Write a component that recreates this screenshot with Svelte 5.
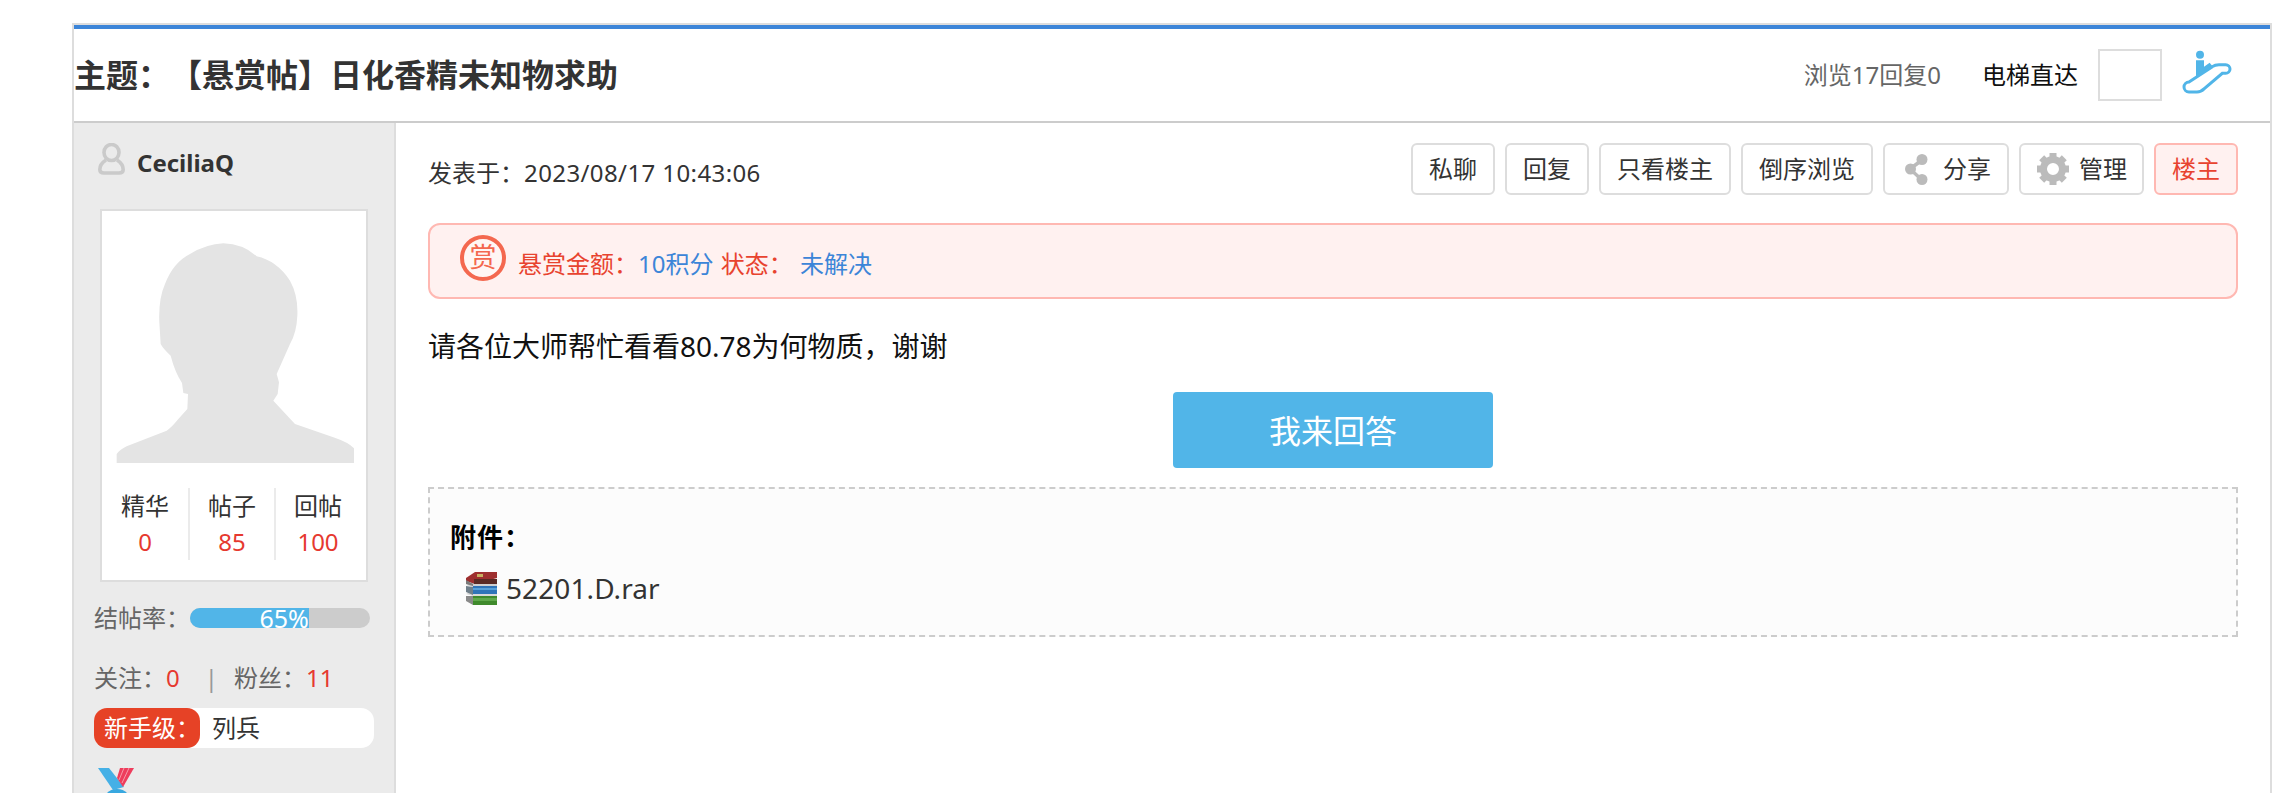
<script>
  const rate = 65;
  const stats = [
    { label: '精华', value: 0 },
    { label: '帖子', value: 85 },
    { label: '回帖', value: 100 }
  ];
  const teeth = [0, 45, 90, 135, 180, 225, 270, 315];
</script>

<div class="page">
  <div class="topic">
    <header class="head">
      <h1>主题：【悬赏帖】日化香精未知物求助</h1>
      <div class="head-right">
        <span class="views">浏览17回复0</span>
        <span class="lift">电梯直达</span>
        <input class="floor" type="text" aria-label="楼层" />
        <svg class="lift-icon" width="65" height="55" viewBox="0 0 195 165" aria-hidden="true">
          <circle cx="75" cy="26" r="12" fill="#51b5e8" />
          <path d="M63 43 H87 V62 L104 50 L112 60 L78 86 L63 96 Z" fill="#51b5e8" />
          <path d="M42 108 L112 62 Q120 56 132 56 H152 A13 13 0 0 1 152 82 H142 L88 128 Q78 138 66 138 H42 A15 15 0 0 1 42 108 Z" fill="none" stroke="#51b5e8" stroke-width="9" />
        </svg>
      </div>
    </header>

    <div class="body">
      <aside class="side">
        <div class="user">
          <svg class="user-icon" width="27" height="32" viewBox="0 0 27 32" aria-hidden="true">
            <ellipse cx="13.5" cy="9.5" rx="7.5" ry="8" fill="none" stroke="#cacaca" stroke-width="3.6" />
            <path d="M8 17 Q1.8 21 1.8 26.5 Q1.8 30 6 30 H21 Q25.2 30 25.2 26.5 Q25.2 21 19 17" fill="none" stroke="#cacaca" stroke-width="3.6" />
          </svg>
          <span class="name">CeciliaQ</span>
        </div>

        <div class="card">
          <svg class="avatar" width="264" height="252" viewBox="6 6 792 756" aria-hidden="true">
            <path fill="#e4e4e4" d="M50 762 L50 735 Q60 722 80 712 L200 665 Q215 655 235 630 L262 600 L264 555 L250 552 L246 522 Q225 490 212 440 Q190 420 182 405 L178 340 Q175 270 195 225 Q220 160 270 135 Q320 105 370 103 Q430 105 470 142 Q530 155 570 215 Q595 260 592 320 Q590 370 570 405 L530 495 L537 520 L533 555 L520 575 L585 645 L700 685 Q745 700 762 718 L762 762 Z" />
          </svg>
          <div class="stats">
            {#each stats as s}
              <div class="stat">
                <span>{s.label}</span>
                <b>{s.value}</b>
              </div>
            {/each}
          </div>
        </div>

        <div class="rate">
          <span class="rate-label">结帖率：</span>
          <div class="track">
            <div class="fill" style:width="{rate + 1}%">{rate}%</div>
          </div>
        </div>

        <div class="follow">
          关注：<em>0</em><i>|</i>粉丝：<em>11</em>
        </div>

        <div class="level">
          <span class="level-tag">新手级：</span>
          <span class="level-name">列兵</span>
        </div>

        <svg class="medal" width="40" height="50" viewBox="0 0 40 50" aria-hidden="true">
          <polygon points="1,0 12,0 27,19 16,22" fill="#45b0e6" />
          <polygon points="23,0 37,0 26,19 20,10" fill="#ee3d5c" />
          <path d="M27 0 L22 12 M32 0 L25 15" stroke="#f59aaa" stroke-width="1" />
          <circle cx="20" cy="36" r="15" fill="#38a8e0" />
        </svg>
      </aside>

      <main class="main">
        <div class="meta">
          <span class="date">发表于：<span class="stamp">2023/08/17 10:43:06</span></span>
          <div class="actions">
            <button>私聊</button>
            <button>回复</button>
            <button>只看楼主</button>
            <button>倒序浏览</button>
            <button class="with-icon share">
              <svg width="24" height="32" viewBox="0 0 24 32" aria-hidden="true">
                <path d="M17 7 L5 16 L17 27" fill="none" stroke="#bbb" stroke-width="3.5" />
                <circle cx="17" cy="6.5" r="5.5" fill="#bbb" />
                <circle cx="5.5" cy="16" r="5.5" fill="#bbb" />
                <circle cx="17" cy="26.5" r="5.5" fill="#bbb" />
              </svg>
              分享
            </button>
            <button class="with-icon manage">
              <svg width="32" height="32" viewBox="0 0 32 32" aria-hidden="true">
                <circle cx="16" cy="16" r="9.5" fill="none" stroke="#bbb" stroke-width="7" />
                {#each teeth as a}
                  <rect x="12.5" y="0" width="7" height="7" fill="#bbb" transform="rotate({a} 16 16)" />
                {/each}
              </svg>
              管理
            </button>
            <button class="owner">楼主</button>
          </div>
        </div>

        <div class="bounty">
          <span class="seal">赏</span>
          <span class="bounty-text">悬赏金额：<a href="#top">10积分</a> 状态： <a href="#top">未解决</a></span>
        </div>

        <p class="content">请各位大师帮忙看看80.78为何物质，谢谢</p>

        <div class="answer-wrap">
          <button class="answer">我来回答</button>
        </div>

        <div class="attach">
          <div class="attach-title">附件：</div>
          <div class="file">
            <svg width="32" height="33" viewBox="0 0 32 33" aria-hidden="true">
              <polygon points="1,22 8,18 32,18 32,24 8,24" fill="#d8d8d8" />
              <polygon points="1,24 8,24 8,33 1,29" fill="#8a8a8a" />
              <rect x="8" y="24" width="24" height="9" fill="#3f8a2c" />
              <rect x="8" y="26" width="24" height="3" fill="#5fa84a" />
              <polygon points="1,13 8,10 32,10 32,15 8,15" fill="#cfcfcf" />
              <polygon points="1,14 8,15 8,23 1,20" fill="#6f7f8a" />
              <rect x="8" y="14" width="24" height="8" fill="#2f74b8" />
              <rect x="8" y="16" width="24" height="2" fill="#58a0d8" />
              <polygon points="1,6 10,0 32,0 32,6 10,12 1,9" fill="#9e2f2f" />
              <polygon points="1,8 8,12 8,14 1,12" fill="#7a7a7a" />
              <rect x="9" y="7" width="23" height="5" fill="#5a2a24" />
              <rect x="12" y="2" width="6" height="3" fill="#c8b060" />
            </svg>
            <span>52201.D.rar</span>
          </div>
        </div>
      </main>
    </div>
  </div>
</div>

<style>
  :global(html), :global(body) {
    margin: 0;
    background: #fff;
    overflow: hidden;
  }
  * {
    box-sizing: border-box;
  }
  .page {
    padding: 23px 0 0 72px;
    font-family: "Noto Sans", "Noto Sans CJK SC", sans-serif;
    font-size: 24px;
    line-height: 36px;
    color: #333;
    text-spacing-trim: space-all;
  }
  .topic {
    width: 2200px;
    border: 2px solid #ddd;
    border-bottom: 0;
  }
  .head {
    height: 98px;
    display: flex;
    align-items: center;
    border-top: 4px solid #3c85d8;
    border-bottom: 2px solid #ccc;
    padding-right: 30px;
  }
  h1 {
    margin: 0;
    font-size: 32px;
    line-height: 44px;
    font-weight: 700;
    color: #333;
    white-space: nowrap;
  }
  .head-right {
    margin-left: auto;
    display: flex;
    align-items: center;
  }
  .views {
    color: #666;
  }
  .lift {
    margin-left: 41px;
    color: #111;
  }
  .floor {
    width: 64px;
    height: 52px;
    margin-left: 20px;
    border: 2px solid #ddd;
    background: #fff;
    padding: 0;
  }
  .lift-icon {
    display: block;
    margin: 0 0 4px 13px;
  }
  .body {
    display: flex;
    align-items: stretch;
  }
  .side {
    flex: 0 0 322px;
    background: #ebebeb;
    border-right: 2px solid #ddd;
    padding: 20px 0 40px 20px;
  }
  .user {
    display: flex;
    height: 40px;
    align-items: center;
    padding-left: 4px;
  }
  .user-icon {
    align-self: flex-start;
    display: block;
  }
  .name {
    margin-left: 12px;
    font-weight: 700;
    color: #333;
  }
  .card {
    width: 268px;
    margin: 26px 0 0 6px;
    border: 2px solid #ddd;
    background: #fff;
    padding-bottom: 20px;
  }
  .avatar {
    display: block;
    margin-bottom: 25px;
  }
  .stats {
    display: flex;
    height: 72px;
  }
  .stat {
    flex: 0 0 86px;
    text-align: center;
    border-left: 2px solid #ebebeb;
  }
  .stat:first-child {
    border-left: 0;
  }
  .stat span,
  .stat b {
    display: block;
    font-weight: 400;
  }
  .stat b {
    color: #e6392f;
  }
  .rate {
    display: flex;
    align-items: center;
    margin-top: 18px;
    color: #666;
  }
  .rate-label {
    width: 96px;
  }
  .track {
    width: 180px;
    height: 20px;
    border-radius: 10px;
    background: #ccc;
  }
  .fill {
    height: 20px;
    border-radius: 10px 0 0 10px;
    background: #51b5e8;
    color: #fff;
    font-size: 25px;
    line-height: 20px;
    text-align: right;
    white-space: nowrap;
  }
  .follow {
    margin-top: 24px;
    color: #666;
    white-space: nowrap;
  }
  .follow em {
    font-style: normal;
    color: #e6392f;
  }
  .follow i {
    font-style: normal;
    color: #999;
    margin: 0 16px 0 25px;
  }
  .level {
    display: flex;
    align-items: center;
    width: 280px;
    height: 40px;
    margin-top: 12px;
    border-radius: 13px;
    background: #fff;
  }
  .level-tag {
    width: 106px;
    height: 40px;
    line-height: 40px;
    padding-left: 10px;
    border-radius: 13px;
    background: #e64226;
    color: #fff;
    white-space: nowrap;
  }
  .level-name {
    margin-left: 12px;
  }
  .medal {
    display: block;
    margin: 20px 0 0 3px;
  }
  .main {
    flex: 1;
    min-width: 0;
    padding: 20px 32px 0;
  }
  .meta {
    display: flex;
    align-items: center;
    justify-content: space-between;
    height: 52px;
  }
  .date {
    margin-top: 8px;
  }
  .stamp {
    letter-spacing: 0.4px;
  }
  .actions {
    display: flex;
    gap: 10px;
  }
  .actions button {
    height: 52px;
    padding: 0 16px;
    border: 2px solid #ddd;
    border-radius: 6px;
    background: #fff;
    color: #333;
    font: inherit;
    line-height: 48px;
    white-space: nowrap;
  }
  .actions .with-icon {
    display: flex;
    align-items: center;
  }
  .actions .share {
    padding-left: 20px;
    gap: 14px;
  }
  .actions .manage {
    gap: 10px;
    padding-right: 15px;
  }
  .actions .owner {
    border-color: #ffb8b2;
    background: #fff1f0;
    color: #e8432f;
  }
  .bounty {
    display: flex;
    align-items: center;
    height: 76px;
    margin-top: 28px;
    padding-left: 30px;
    border: 2px solid #ffb8b2;
    border-radius: 12px;
    background: #fff1f0;
    color: #e8432f;
    word-spacing: 1px;
  }
  .seal {
    flex: 0 0 46px;
    width: 46px;
    height: 46px;
    margin-bottom: 6px;
    border: 4px solid #f4684f;
    border-radius: 50%;
    background: #fff6f4;
    color: #f4684f;
    font-size: 27px;
    line-height: 36px;
    text-align: center;
  }
  .bounty-text {
    margin: 6px 0 0 12px;
  }
  .bounty a {
    color: #3c85d8;
    text-decoration: none;
  }
  .content {
    margin: 27px 0 0;
    font-size: 28px;
    line-height: 40px;
    color: #111;
  }
  .answer-wrap {
    display: flex;
    justify-content: center;
    margin-top: 26px;
  }
  .answer {
    width: 320px;
    height: 76px;
    border: 0;
    border-radius: 4px;
    background: #51b5e8;
    color: #fff;
    font: inherit;
    font-size: 32px;
    line-height: 76px;
  }
  .attach {
    height: 150px;
    margin-top: 19px;
    padding: 30px 0 0 20px;
    border: 2px dashed #ccc;
    background: #fcfcfc;
  }
  .attach-title {
    font-size: 26px;
    letter-spacing: 1px;
    font-weight: 700;
    color: #000;
  }
  .file {
    display: flex;
    align-items: center;
    gap: 9px;
    height: 40px;
    margin: 13px 0 0 15px;
    font-size: 28px;
    letter-spacing: 0.1px;
  }
  .file svg {
    display: block;
  }
</style>
